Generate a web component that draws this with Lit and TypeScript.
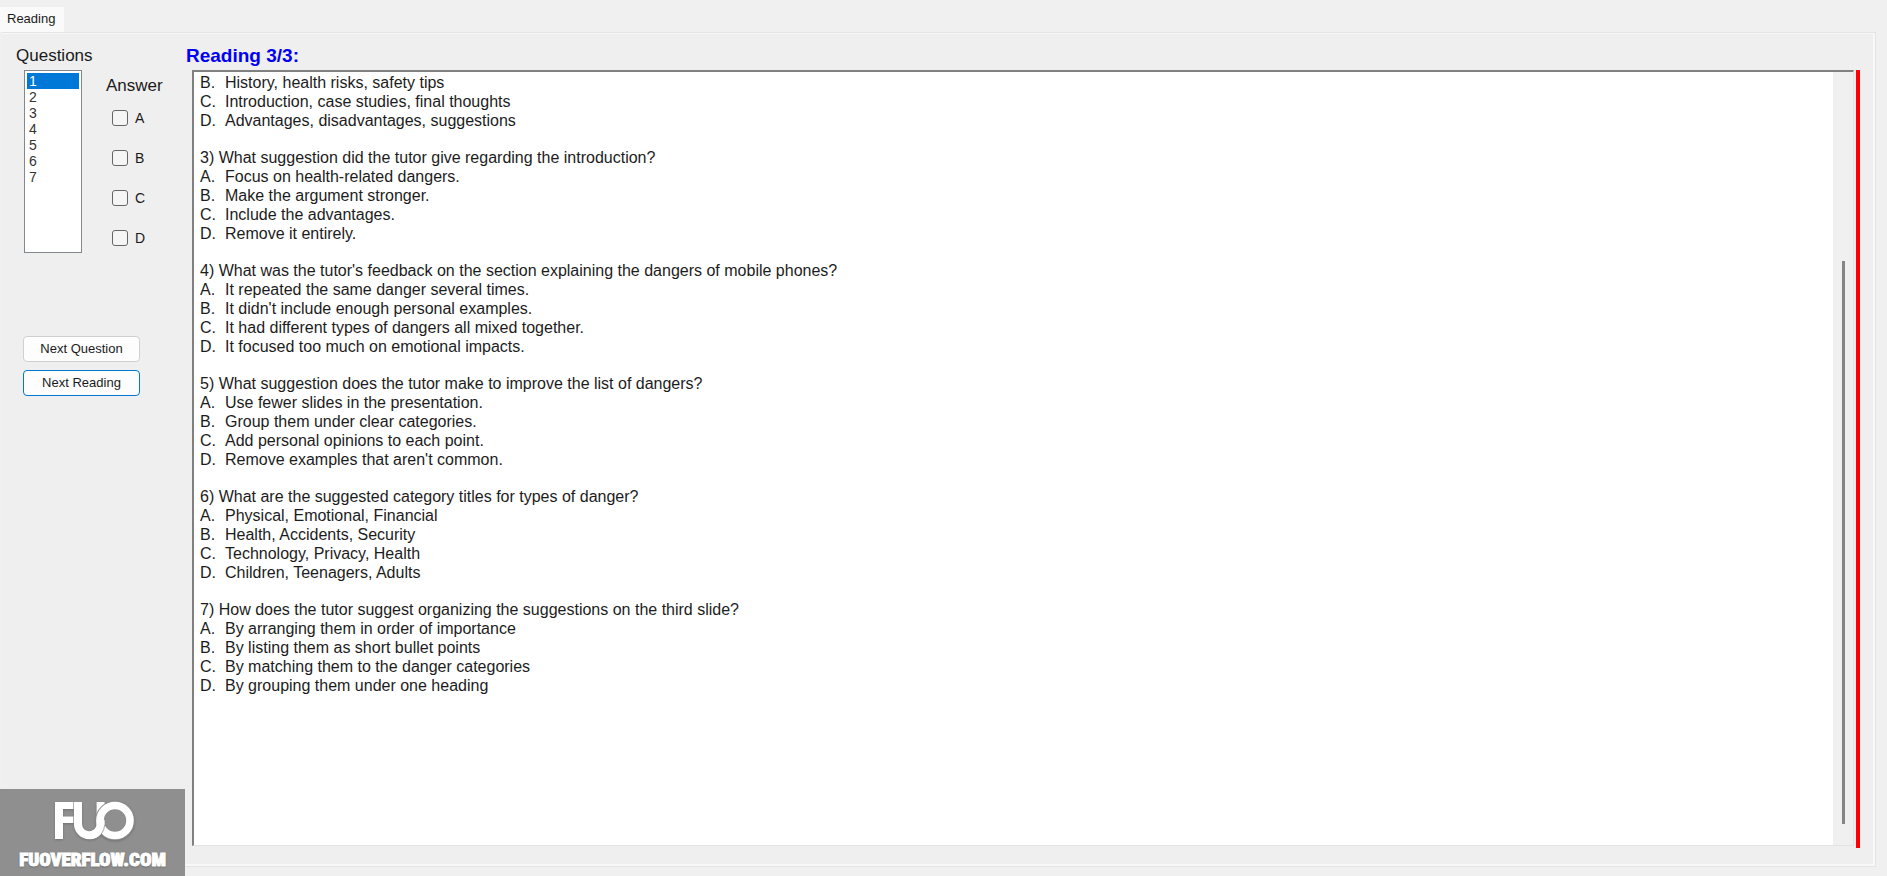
import { LitElement, html, css, svg } from "lit";
import { customElement, state } from "lit/decorators.js";

interface Question {
  title?: string;
  options: [string, string][];
}

const QUESTIONS: Question[] = [
  {
    options: [
      ["B.", "History, health risks, safety tips"],
      ["C.", "Introduction, case studies, final thoughts"],
      ["D.", "Advantages, disadvantages, suggestions"],
    ],
  },
  {
    title: "3) What suggestion did the tutor give regarding the introduction?",
    options: [
      ["A.", "Focus on health-related dangers."],
      ["B.", "Make the argument stronger."],
      ["C.", "Include the advantages."],
      ["D.", "Remove it entirely."],
    ],
  },
  {
    title: "4) What was the tutor's feedback on the section explaining the dangers of mobile phones?",
    options: [
      ["A.", "It repeated the same danger several times."],
      ["B.", "It didn't include enough personal examples."],
      ["C.", "It had different types of dangers all mixed together."],
      ["D.", "It focused too much on emotional impacts."],
    ],
  },
  {
    title: "5) What suggestion does the tutor make to improve the list of dangers?",
    options: [
      ["A.", "Use fewer slides in the presentation."],
      ["B.", "Group them under clear categories."],
      ["C.", "Add personal opinions to each point."],
      ["D.", "Remove examples that aren't common."],
    ],
  },
  {
    title: "6) What are the suggested category titles for types of danger?",
    options: [
      ["A.", "Physical, Emotional, Financial"],
      ["B.", "Health, Accidents, Security"],
      ["C.", "Technology, Privacy, Health"],
      ["D.", "Children, Teenagers, Adults"],
    ],
  },
  {
    title: "7) How does the tutor suggest organizing the suggestions on the third slide?",
    options: [
      ["A.", "By arranging them in order of importance"],
      ["B.", "By listing them as short bullet points"],
      ["C.", "By matching them to the danger categories"],
      ["D.", "By grouping them under one heading"],
    ],
  },
];

@customElement("exam-sidebar")
export class ExamSidebar extends LitElement {
  static styles = css`
    :host {
      display: block;
      font-family: "Liberation Sans", Arial, sans-serif;
      color: #1a1a1a;
    }
    .label {
      display: block;
      font-size: 17px;
      line-height: 20px;
    }
    .questions-label {
      padding: 13px 0 4px 14px;
    }
    .pickers {
      display: flex;
      align-items: flex-start;
      gap: 24px;
      padding-left: 22px;
    }
    .list {
      appearance: none;
      box-sizing: border-box;
      width: 58px;
      height: 183px;
      margin: 0;
      padding: 2px;
      border: 1px solid #828790;
      border-radius: 0;
      outline: none;
      background: #fff;
      overflow: hidden;
      font: 14px/16px "Liberation Sans", Arial, sans-serif;
    }
    .list option {
      min-height: 16px;
      height: 16px;
      padding: 0 2px;
      line-height: 16px;
      color: #333;
    }
    .list option:checked {
      background: #0078d7 linear-gradient(#0078d7, #0078d7);
      color: #fff;
    }
    .answers {
      margin: 0;
      padding: 6px 0 0;
      border: 0;
    }
    .answers legend {
      float: left;
      padding: 0 0 2px;
    }
    .choice {
      clear: both;
      display: flex;
      align-items: center;
      gap: 7px;
      height: 40px;
      padding-left: 6px;
      font-size: 14px;
    }
    .box {
      appearance: none;
      box-sizing: border-box;
      width: 16px;
      height: 16px;
      margin: 0;
      border: 1px solid #666;
      border-radius: 3px;
      background: #f5f5f5;
    }
    .box:checked {
      background: #0067c0;
    }
    .actions {
      display: flex;
      flex-direction: column;
      gap: 8px;
      width: 117px;
      padding: 78px 0 0 21px;
    }
    .button {
      height: 26px;
      padding: 0;
      border: 1px solid #d0d0d0;
      border-radius: 4px;
      background: #fdfdfd;
      color: #1a1a1a;
      font: 13px/16px "Liberation Sans", Arial, sans-serif;
    }
    .button.primary {
      border-color: #0078d4;
    }
  `;

  @state() private selected = "1";

  private pick(e: Event) {
    this.selected = (e.target as HTMLSelectElement).value;
  }

  render() {
    return html`
      <label class="label questions-label" for="list">Questions</label>
      <div class="pickers">
        <select class="list" id="list" size="11" @change=${this.pick}>
          ${["1", "2", "3", "4", "5", "6", "7"].map(
            (n) => html`<option value=${n} ?selected=${n === this.selected}>${n}</option>`
          )}
        </select>
        <fieldset class="answers">
          <legend class="label">Answer</legend>
          ${["A", "B", "C", "D"].map(
            (n) => html`<label class="choice"><input class="box" type="checkbox" name="answer" value=${n} />${n}</label>`
          )}
        </fieldset>
      </div>
      <div class="actions">
        <button class="button" type="button">Next Question</button>
        <button class="button primary" type="button">Next Reading</button>
      </div>
    `;
  }
}

@customElement("reading-pane")
export class ReadingPane extends LitElement {
  static styles = css`
    :host {
      display: flex;
      flex-direction: column;
      font-family: "Liberation Sans", Arial, sans-serif;
    }
    .title {
      margin: 0;
      padding: 13px 0 4px;
      color: #0000f5;
      font-size: 19px;
      line-height: 20px;
    }
    .row {
      flex: 1;
      display: flex;
      padding-left: 6px;
      border-right: 4px solid #fb0007;
    }
    .frame {
      flex: 1;
      display: flex;
      border: solid;
      border-width: 2px 1px 1px 2px;
      border-color: #808080 #e3e3e3 #e3e3e3 #808080;
      background: #fff;
      margin: 0 2px 2px 0;
    }
    .text {
      flex: 1;
      padding: 1px 6px;
      color: #1c1c1c;
      font-size: 16px;
      line-height: 19px;
    }
    .question {
      margin: 0 0 18px;
    }
    .prompt,
    .option {
      margin: 0;
    }
    .option {
      display: flex;
    }
    .letter {
      width: 25px;
    }
    .track {
      display: flex;
      flex-direction: column;
      align-items: center;
      width: 20px;
      background: #f0f0f0;
    }
    .before {
      flex: 189;
    }
    .thumb {
      flex: 563;
      width: 3px;
      background: #858585;
    }
    .after {
      flex: 21;
    }
  `;

  render() {
    return html`
      <h1 class="title">Reading 3/3:</h1>
      <div class="row">
        <div class="frame">
          <div class="text">
            ${QUESTIONS.map(
              (q) => html`<div class="question">
                ${q.title ? html`<p class="prompt">${q.title}</p>` : null}
                ${q.options.map(
                  ([l, t]) => html`<p class="option"><span class="letter">${l}</span><span>${t}</span></p>`
                )}
              </div>`
            )}
          </div>
          <div class="track">
            <div class="before"></div>
            <div class="thumb"></div>
            <div class="after"></div>
          </div>
        </div>
      </div>
    `;
  }
}

@customElement("site-mark")
export class SiteMark extends LitElement {
  static styles = css`
    :host {
      box-sizing: border-box;
      display: flex;
      flex-direction: column;
      align-items: center;
      width: 185px;
      height: 87px;
      padding-top: 10px;
      background: #8f8f8f;
      color: #fff;
    }
    .logo {
      display: block;
      filter: drop-shadow(0 1px 1px #5558);
    }
    .name {
      padding-top: 9px;
      font: 900 19px/20px Impact, "Roboto Condensed", Roboto, sans-serif;
      -webkit-text-stroke: 1px #fff;
      text-shadow: 0 1px 2px #555;
    }
  `;

  render() {
    return html`
      <svg class="logo" width="84" height="42" viewBox="0 0 84 42" aria-hidden="true">
        ${svg`
          <path d="M4 3H22.400V10H12V17.500H22.400V24H12V40H4Z" fill="#fff" />
          <path d="M23 3h8v22a7.300 7.300 0 0 0 14.600 0V3h8v22a15.300 15.300 0 0 1-30.600 0Z" fill="#fff" />
          <circle cx="64" cy="21.500" r="11" fill="#8f8f8f" />
          <circle cx="64" cy="21.500" r="15.200" fill="none" stroke="#8f8f8f" stroke-width="9" />
          <circle cx="64" cy="21.500" r="15" fill="none" stroke="#fff" stroke-width="7.600" />
          <path d="M45.600 21V25a7.300 7.300 0 0 1-5 7v8.200A15.300 15.300 0 0 0 53.600 25V21Z" fill="#fff" />
          <path d="M53.800 25.500Q53.500 31 50 35.500" fill="none" stroke="#8f8f8f" stroke-width=".8" />
        `}
      </svg>
      <span class="name">FUOVERFLOW.COM</span>
    `;
  }
}

@customElement("app-root")
export class AppRoot extends LitElement {
  static styles = css`
    :host {
      position: relative;
      box-sizing: border-box;
      display: flex;
      flex-direction: column;
      min-height: 100vh;
      padding: 7px 11px 9px 0;
      background: #f0f0f0;
      font-family: "Liberation Sans", Arial, sans-serif;
    }
    .tabs {
      display: flex;
    }
    .tab {
      height: 25px;
      padding: 0 9px 2px 7px;
      border: 0;
      background: #fafafa;
      color: #1a1a1a;
      font: 13px/16px "Liberation Sans", Arial, sans-serif;
    }
    .page {
      flex: 1;
      display: flex;
      margin-left: 2px;
      padding: 0 15px 18px 0;
      border: 1px solid #e4e4e4;
      border-left: 0;
      box-shadow: inset 0 1px #f8f8f8, inset -2px -2px #f8f8f8;
      background: #efefef;
    }
    .side {
      flex: 0 0 184px;
    }
    .main {
      flex: 1;
    }
    .mark {
      position: absolute;
      left: 0;
      bottom: 0;
    }
  `;

  render() {
    return html`
      <div class="tabs" role="tablist">
        <button class="tab" type="button" role="tab" aria-selected="true">Reading</button>
      </div>
      <div class="page" role="tabpanel" aria-label="Reading">
        <exam-sidebar class="side"></exam-sidebar>
        <reading-pane class="main"></reading-pane>
      </div>
      <site-mark class="mark"></site-mark>
    `;
  }
}
